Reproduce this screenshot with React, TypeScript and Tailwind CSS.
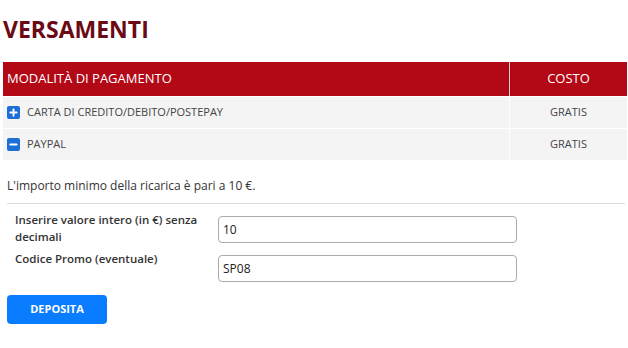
import { Plus, Minus } from "lucide-react";

const rows = [
  { name: "CARTA DI CREDITO/DEBITO/POSTEPAY", open: false },
  { name: "PAYPAL", open: true },
];

export default function App() {
  return (
    <div
      className="w-[628px] h-[348px] bg-white px-[3px] pt-[14px] text-[#333]"
      style={{ fontFamily: '"Open Sans", "Liberation Sans", sans-serif' }}
    >
      <h1 className="text-[23px] leading-[30px] font-bold text-[#6b0a14]">
        VERSAMENTI
      </h1>
      <div className="mt-[18px] w-[624px]">
        <div className="flex h-[34px] bg-[#b30816] text-white text-[13px]">
          <div className="flex-1 flex items-center px-[4px] border-r border-white/80">
            MODALITÀ DI PAGAMENTO
          </div>
          <div className="w-[117px] flex items-center justify-center">COSTO</div>
        </div>
        {rows.map((r) => (
          <div
            key={r.name}
            className="flex h-[31px] mt-[1px] bg-[#f4f4f4] text-[11px] text-[#444]"
          >
            <div className="flex-1 flex items-center gap-[7px] px-[4px] border-r border-white">
              <span className="w-[13px] h-[13px] rounded-[2px] bg-[#1c6fd6] flex items-center justify-center">
                {r.open ? (
                  <Minus size={11} strokeWidth={4} color="white" />
                ) : (
                  <Plus size={11} strokeWidth={4} color="white" />
                )}
              </span>
              {r.name}
            </div>
            <div className="w-[117px] flex items-center justify-center">GRATIS</div>
          </div>
        ))}
      </div>
      <p className="mt-[17px] pl-[4px] text-[12px] leading-[18px] text-[#333]">
        L'importo minimo della ricarica è pari a 10 €.
      </p>
      <div className="mt-[8px] ml-[4px] border-t border-[#ddd]" />
      <div className="mt-[7px] pl-[12px] flex flex-col gap-[5px]">
        <div className="flex items-start">
          <label className="w-[203px] text-[11.5px] leading-[17px] font-semibold text-[#333]">
            Inserire valore intero (in €) senza decimali
          </label>
          <input
            defaultValue="10"
            className="mt-[5px] w-[299px] h-[27px] border border-[#aaa] rounded-[4px] px-[4px] text-[12px] text-[#222] outline-none"
          />
        </div>
        <div className="flex items-start">
          <label className="w-[203px] text-[11.5px] leading-[17px] font-semibold text-[#333]">
            Codice Promo (eventuale)
          </label>
          <input
            defaultValue="SP08"
            className="mt-[5px] w-[299px] h-[27px] border border-[#aaa] rounded-[4px] px-[4px] text-[12px] text-[#222] outline-none"
          />
        </div>
      </div>
      <button className="mt-[13px] ml-[4px] w-[100px] h-[29px] rounded-[4px] bg-[#0a7cff] text-white text-[11px] font-bold">
        DEPOSITA
      </button>
    </div>
  );
}
